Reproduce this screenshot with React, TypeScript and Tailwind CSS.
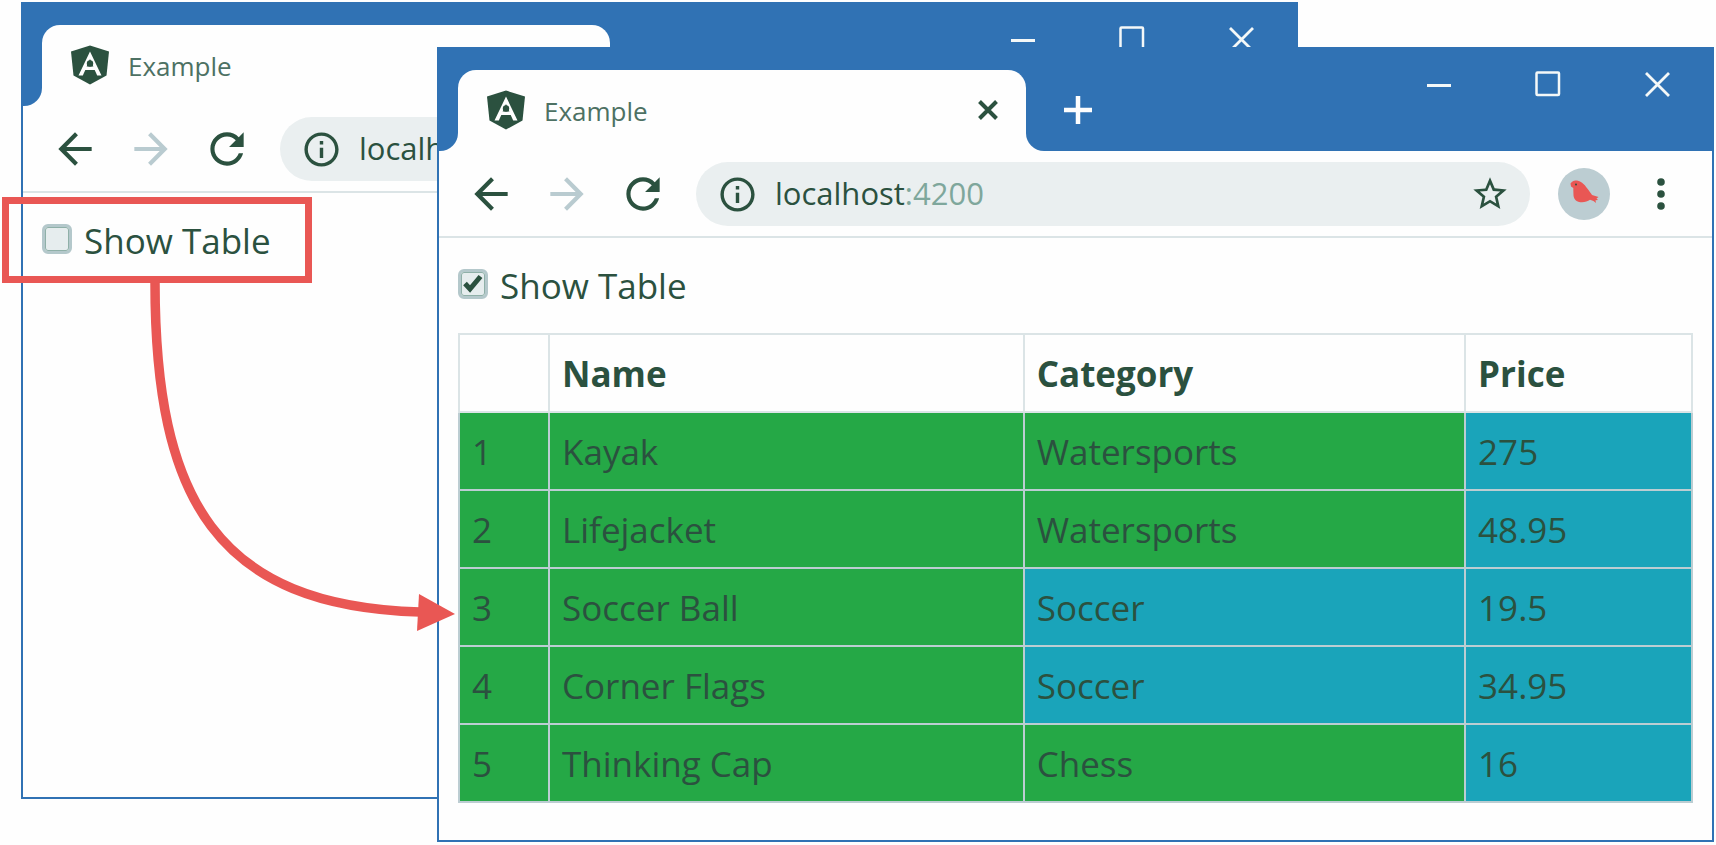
import { useState, type ReactNode } from "react";

const PATHS = {
  back: "M20 11H7.83l5.59-5.59L12 4l-8 8 8 8 1.41-1.41L7.83 13H20v-2z",
  forward: "M12 4l-1.41 1.41L16.17 11H4v2h12.17l-5.58 5.59L12 20l8-8z",
  reload:
    "M17.65 6.35C16.2 4.9 14.21 4 12 4c-4.42 0-7.99 3.58-7.99 8s3.57 8 7.99 8c3.73 0 6.84-2.55 7.73-6h-2.08c-.82 2.33-3.04 4-5.65 4-3.31 0-6-2.69-6-6s2.69-6 6-6c1.66 0 3.14.69 4.22 1.78L13 11h7V4l-2.35 2.35z",
  info: "M11 17h2v-6h-2v6zm1-15C6.48 2 2 6.48 2 12s4.48 10 10 10 10-4.48 10-10S17.52 2 12 2zm0 18c-4.41 0-8-3.59-8-8s3.59-8 8-8 8 3.59 8 8-3.59 8-8 8zM11 9h2V7h-2v2z",
  star: "M22 9.24l-7.19-.62L12 2 9.19 8.63 2 9.24l5.46 4.73L5.82 21 12 17.27 18.18 21l-1.63-7.03L22 9.24zM12 15.4l-3.76 2.27 1-4.28-3.32-2.88 4.38-.38L12 6.1l1.71 4.04 4.38.38-3.32 2.88 1 4.28L12 15.4z",
};

function Glyph({ d, className }: { d: string; className: string }) {
  return (
    <svg viewBox="0 0 24 24" className={className} fill="currentColor" aria-hidden="true">
      <path d={d} />
    </svg>
  );
}

function AngularLogo() {
  return (
    <svg viewBox="0 0 40 40" className="h-10 w-10 shrink-0" aria-hidden="true">
      <path d="M20 0.5 39 6.5 36.5 30.5 20 39.5 3.5 30.5 1 6.5Z" fill="#2b513f" />
      <path
        d="M20 6.5 8.5 30.5h4.3l2.5-5.6h9.4l2.5 5.6h4.3ZM20 14l3.4 7.6h-6.8Z"
        fill="#fefefe"
        fillRule="evenodd"
      />
      <circle cx="20" cy="18.5" r="3.2" fill="#2b513f" />
    </svg>
  );
}

function WindowControls() {
  return (
    <div className="ml-auto flex gap-[73px] self-start pt-[22px] pr-[37px] text-[#f4f8f8]">
      <button type="button" aria-label="Minimize" className="h-[26px] w-9">
        <svg viewBox="0 0 36 26" className="h-[26px] w-9" fill="none" stroke="currentColor" strokeWidth="3">
          <path d="M6 14.500h24" />
        </svg>
      </button>
      <button type="button" aria-label="Maximize" className="h-[26px] w-9">
        <svg viewBox="0 0 36 26" className="h-[26px] w-9" fill="none" stroke="currentColor" strokeWidth="2.5">
          <rect x="6.5" y="1.5" width="22.5" height="22.5" rx="1" />
        </svg>
      </button>
      <button type="button" aria-label="Close window" className="h-[26px] w-9">
        <svg viewBox="0 0 36 26" className="h-[26px] w-9" fill="none" stroke="currentColor" strokeWidth="2.8">
          <path d="M7 2l23 23M30 2L7 25" />
        </svg>
      </button>
    </div>
  );
}

function TitleBar() {
  return (
    <header className="flex h-[102px] items-end bg-[#3072b4]">
      <div className="h-[18px] w-[19px] bg-[#fefefe]">
        <div className="h-full rounded-br-[18px] bg-[#3072b4]" />
      </div>
      <div className="flex h-[81px] w-[568px] items-center rounded-t-[18px] bg-[#fefefe] pr-7 pb-[2px] pl-7">
        <AngularLogo />
        <span className="ml-[18px] pt-[2px] text-[26px] leading-9 text-[#4d7163]">Example</span>
        <button type="button" aria-label="Close tab" className="ml-auto h-5 w-5">
          <svg viewBox="0 0 20 20" className="h-5 w-5" fill="none" stroke="#2b513f" strokeWidth="4">
            <path d="M1.5 1.5l17 17M18.5 1.5l-17 17" />
          </svg>
        </button>
      </div>
      <div className="h-[18px] w-[18px] bg-[#fefefe]">
        <div className="h-full rounded-bl-[18px] bg-[#3072b4]" />
      </div>
      <button type="button" aria-label="New tab" className="mb-[26px] ml-[19px] h-[30px] w-[30px]">
        <svg viewBox="0 0 30 30" className="h-[30px] w-[30px]" fill="none" stroke="#fefefe" strokeWidth="4.5">
          <path d="M15 1v28M1 15h28" />
        </svg>
      </button>
      <WindowControls />
    </header>
  );
}

function Toolbar() {
  return (
    <div className="flex items-center border-b-2 border-[#dbe4e6] pt-[11px] pr-[39px] pb-[10px] pl-[27px] text-[#2b513f]">
      <button type="button" aria-label="Back" className="h-[50px] w-[50px] shrink-0">
        <Glyph d={PATHS.back} className="h-[50px] w-[50px]" />
      </button>
      <button type="button" aria-label="Forward" className="ml-[26px] h-[50px] w-[50px] shrink-0 text-[#b9cbd0]">
        <Glyph d={PATHS.forward} className="h-[50px] w-[50px]" />
      </button>
      <button type="button" aria-label="Reload" className="ml-[26px] h-[50px] w-[50px] shrink-0">
        <Glyph d={PATHS.reload} className="h-[50px] w-[50px]" />
      </button>
      <div className="ml-7 flex h-16 min-w-0 grow items-center rounded-full bg-[#eaeff0] pr-5 pl-[21px]">
        <Glyph d={PATHS.info} className="h-[41px] w-[41px] shrink-0" />
        <input
          type="text"
          aria-label="Address"
          defaultValue="localhost"
          className="field-sizing-content ml-[17px] h-12 bg-transparent pb-[2px] text-[31px] leading-[46px] outline-none"
        />
        <span className="h-12 text-[31px] leading-[46px] text-[#7fa79c]">:4200</span>
        <button type="button" aria-label="Bookmark" className="ml-auto h-10 w-10 shrink-0">
          <Glyph d={PATHS.star} className="h-10 w-10" />
        </button>
      </div>
      <button type="button" aria-label="Profile" className="ml-7 h-[52px] w-[52px] shrink-0">
        <svg viewBox="0 0 52 52" className="h-[52px] w-[52px]" aria-hidden="true">
          <circle cx="26" cy="26" r="26" fill="#bccdd2" />
          <path
            d="M12.500 15.500C14 13 16.500 12.500 19 12.500c5 .5 8.500 5.500 11.500 9.500 1.500 2 2.500 3.500 3.500 5l6.500 2-2 1.500 1.500 1.500-2.500.3.500 2.700-2.500-2-3.500-1.200c-2.500 2-6 2.700-9.500 2.400-4-.3-6.500-2.700-7-6.700-.3-2.500 0-5-.2-7.500l-2.300-1.500Z"
            fill="#e95754"
          />
          <circle cx="18" cy="16.500" r="1" fill="#2b513f" />
        </svg>
      </button>
      <button type="button" aria-label="Menu" className="ml-[39px] h-9 w-6 shrink-0">
        <svg viewBox="0 0 24 36" className="h-9 w-6" fill="currentColor" aria-hidden="true">
          <circle cx="12" cy="6" r="3.800" />
          <circle cx="12" cy="18" r="3.800" />
          <circle cx="12" cy="30" r="3.800" />
        </svg>
      </button>
    </div>
  );
}

function ShowTable({
  id,
  checked,
  onChange,
}: {
  id: string;
  checked: boolean;
  onChange: (value: boolean) => void;
}) {
  return (
    <div className="flex h-[50px] items-center">
      <span className="grid h-[30px] w-[30px] shrink-0">
        <input
          id={id}
          type="checkbox"
          checked={checked}
          onChange={(e) => onChange(e.target.checked)}
          className="col-start-1 row-start-1 h-[30px] w-[30px] appearance-none rounded-md border-[3px] border-[#b4c8cb] bg-[#e6edee] outline-1 -outline-offset-4 outline-[#8fb0a8]"
        />
        {checked && (
          <svg
            viewBox="0 0 30 30"
            className="pointer-events-none col-start-1 row-start-1 h-[30px] w-[30px]"
            fill="none"
            stroke="#2b513f"
            strokeWidth="5"
            aria-hidden="true"
          >
            <path d="M7 14.500l5 5.500L22.500 7.500" />
          </svg>
        )}
      </span>
      <label htmlFor={id} className="ml-3 pt-1 text-[35px] leading-[50px]">
        Show Table
      </label>
    </div>
  );
}

function BrowserWindow({ className, children }: { className: string; children: ReactNode }) {
  return (
    <section className={`absolute overflow-hidden border-2 border-[#3072b4] bg-[#fefefe] ${className}`}>
      <TitleBar />
      <Toolbar />
      <div className="px-[19px] pt-[21px] pb-[37px]">{children}</div>
    </section>
  );
}

const PRODUCTS = [
  { id: 1, name: "Kayak", category: "Watersports", price: "275" },
  { id: 2, name: "Lifejacket", category: "Watersports", price: "48.95" },
  { id: 3, name: "Soccer Ball", category: "Soccer", price: "19.5" },
  { id: 4, name: "Corner Flags", category: "Soccer", price: "34.95" },
  { id: 5, name: "Thinking Cap", category: "Chess", price: "16" },
];

const HEAD = "border-2 border-[#dbe4e6] px-3 pt-[2px] text-left font-bold";
const GREEN = "border-2 border-[#bccdd2] bg-[#25a846] px-3 pt-[2px]";
const BLUE = "border-2 border-[#bccdd2] bg-[#1aa4ba] px-3 pt-[2px]";

function ProductTable() {
  return (
    <table className="mt-6 w-full table-fixed border-collapse text-[35px] leading-[50px]">
      <thead>
        <tr className="h-[78px]">
          <th className={`w-[7.3%] ${HEAD}`} />
          <th className={`w-[38.5%] ${HEAD}`}>Name</th>
          <th className={`w-[35.8%] ${HEAD}`}>Category</th>
          <th className={HEAD}>Price</th>
        </tr>
      </thead>
      <tbody>
        {PRODUCTS.map((p) => (
          <tr key={p.id} className="h-[78px]">
            <td className={GREEN}>{p.id}</td>
            <td className={GREEN}>{p.name}</td>
            <td className={p.category === "Soccer" ? BLUE : GREEN}>{p.category}</td>
            <td className={BLUE}>{p.price}</td>
          </tr>
        ))}
      </tbody>
    </table>
  );
}

export default function App() {
  const [before, setBefore] = useState(false);
  const [after, setAfter] = useState(true);

  return (
    <main className="relative min-h-screen overflow-hidden bg-[#fefefe] font-['Open_Sans','Noto_Sans',sans-serif] text-[#2b513f]">
      <BrowserWindow className="top-[2px] right-[418px] left-[21px] h-[797px]">
        <ShowTable id="before-show" checked={before} onChange={setBefore} />
      </BrowserWindow>
      <BrowserWindow className="top-[47px] right-[2px] left-[437px]">
        <ShowTable id="after-show" checked={after} onChange={setAfter} />
        {after && <ProductTable />}
      </BrowserWindow>
      <div className="pointer-events-none absolute top-[197px] left-[2px] h-[86px] w-[310px] border-[7px] border-[#e95754]" />
      <svg
        viewBox="0 0 320 360"
        className="pointer-events-none absolute top-[280px] left-[140px] h-[360px] w-[320px]"
        aria-hidden="true"
      >
        <path d="M15 2C15 220 77 326 280 332" fill="none" stroke="#e95754" strokeWidth="9.500" />
        <path d="M279 314 315 334 277 351Z" fill="#e95754" />
      </svg>
    </main>
  );
}
